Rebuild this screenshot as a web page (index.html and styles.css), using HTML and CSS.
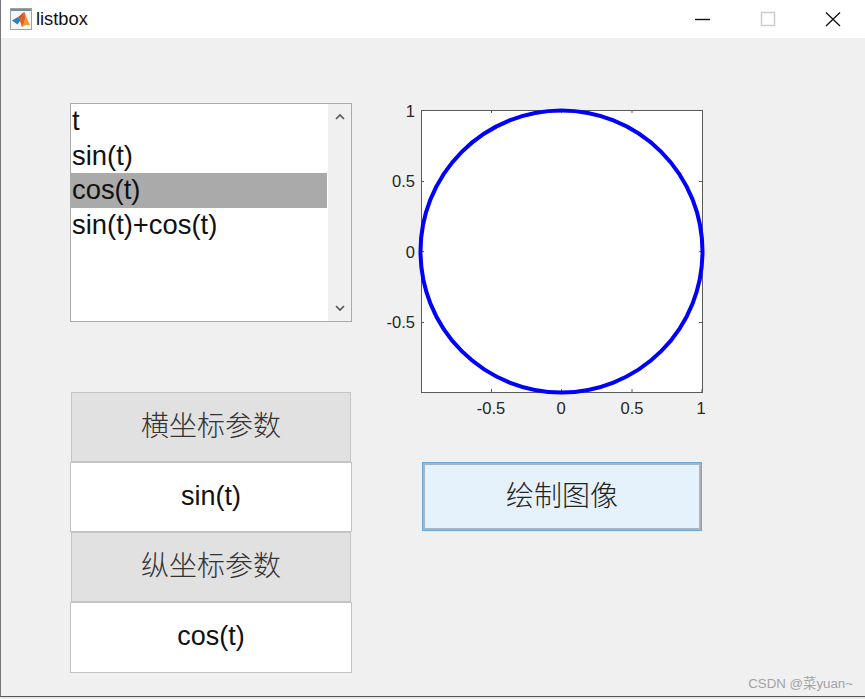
FILE: index.html
```html
<!DOCTYPE html>
<html lang="zh-CN">
<head>
  <meta charset="UTF-8">
  <title>listbox</title>
  <link rel="stylesheet" href="styles.css">
</head>
<body>

  <div class="window">
    <!-- Title bar -->
    <div class="titlebar">
      <svg class="app-icon" width="22" height="22" viewBox="0 0 22 22">
        <rect x="0.5" y="0.5" width="21" height="21" fill="#f6f6f6" stroke="#a0a0a0"/>
        <rect x="1" y="1" width="20" height="2" fill="#6a8fb3"/>
        <path d="M2 12.5 L8 9 L11 11.5 L7.5 16.5 Z" fill="#2f7fc0"/>
        <path d="M8 9 C10 8 12 5 14.5 4 L11 11.5 Z" fill="#c8501f"/>
        <path d="M14.5 4 C16 7 18 14 20.5 17.5 C18 16 16 16.5 12 19 C11.5 16 10.5 14 10 12.5 Z" fill="#ee9a2e"/>
        <path d="M14.5 4 L15 11 L12 19 L10 12.5 Z" fill="#d9622a"/>
      </svg>
      <span class="title">listbox</span>
      <div class="controls">
        <svg class="ctl-min" width="16" height="16" viewBox="0 0 16 16"><path d="M0 8.5 H15" stroke="#111" stroke-width="1.4"/></svg>
        <svg class="ctl-max" width="16" height="16" viewBox="0 0 16 16"><rect x="1.5" y="1.5" width="13" height="13" fill="none" stroke="#ccc" stroke-width="1.5"/></svg>
        <svg class="ctl-close" width="16" height="16" viewBox="0 0 16 16"><path d="M1 1.5 L15 15 M15 1.5 L1 15" stroke="#111" stroke-width="1.3"/></svg>
      </div>
    </div>

    <div class="figure">
      <div class="col-left">
        <!-- Listbox -->
        <div class="listbox">
          <ul class="items">
            <li>t</li>
            <li>sin(t)</li>
            <li class="selected">cos(t)</li>
            <li>sin(t)+cos(t)</li>
          </ul>
          <div class="scrollbar">
            <svg width="10" height="8" viewBox="0 0 10 8"><path d="M1 6 L5 2 L9 6" fill="none" stroke="#555" stroke-width="1.6"/></svg>
            <svg width="10" height="8" viewBox="0 0 10 8"><path d="M1 2 L5 6 L9 2" fill="none" stroke="#555" stroke-width="1.6"/></svg>
          </div>
        </div>

        <!-- Parameters -->
        <div class="params">
          <div class="cell label"><span>横坐标参数</span></div>
          <div class="cell value">sin(t)</div>
          <div class="cell label"><span>纵坐标参数</span></div>
          <div class="cell value">cos(t)</div>
        </div>
      </div>

      <div class="col-right">
        <!-- Axes -->
        <svg class="axes" width="330" height="317" viewBox="0 0 330 317">
          <rect x="41.5" y="7.5" width="281" height="282" fill="#fff" stroke="#5a5a5a"/>
          <path d="M111.5 7 v3 M181.5 7 v3 M252 7 v3 M111.5 289 v-3 M181.5 289 v-3 M252 289 v-3 M322 289 v-3
                   M41 78.5 h3 M41 148.5 h3 M41 219.5 h3 M322 78.5 h-3 M322 148.5 h-3 M322 219.5 h-3" stroke="#5a5a5a"/>
          <circle cx="181.5" cy="148.5" r="141" fill="none" stroke="#0000ff" stroke-width="4"/>
          <g class="tick-y">
            <text x="35" y="14">1</text>
            <text x="35" y="84">0.5</text>
            <text x="35" y="155">0</text>
            <text x="35" y="225">-0.5</text>
          </g>
          <g class="tick-x">
            <text x="111" y="311">-0.5</text>
            <text x="181" y="311">0</text>
            <text x="252" y="311">0.5</text>
            <text x="321" y="311">1</text>
          </g>
        </svg>

        <button class="plot-btn">绘制图像</button>
      </div>
    </div>

    <div class="watermark">CSDN @菜yuan~</div>
  </div>

</body>
</html>
```

FILE: styles.css
```css
html, body { margin: 0; padding: 0; }
body {
  width: 865px;
  height: 699px;
  overflow: hidden;
  background: #e8e8e8;
  font-family: "Liberation Sans", "Noto Sans CJK SC", sans-serif;
  color: #111;
}

.window {
  position: relative;
  height: 697px;
  box-sizing: border-box;
  background: #f0f0f0;
  border-left: 1px solid #777;
  border-bottom: 1px solid #555;
}

/* title bar */
.titlebar {
  display: flex;
  align-items: center;
  height: 38px;
  background: #fff;
  padding-left: 9px;
}
.app-icon { margin-right: 4px; margin-top: -1px; }
.title { font-size: 18.3px; color: #111; margin-top: -1px; }
.controls {
  display: flex;
  align-items: center;
  margin-left: auto;
  margin-right: 24px;
  gap: 49px;
  margin-top: -1px;
}

/* main area */
.figure {
  display: flex;
  gap: 28px;
  padding: 65px 0 0 69px;
}
.col-left { width: 282px; }

.listbox {
  display: flex;
  height: 219px;
  box-sizing: border-box;
  background: #fff;
  border: 1px solid #aaa;
}
.items {
  flex: 1;
  list-style: none;
  margin: 0;
  padding: 0;
  font-size: 27.4px;
  color: #111;
}
.items li {
  height: 34.5px;
  line-height: 33px;
  padding-left: 1px;
}
.items li.selected { background: #aaa; }
.scrollbar {
  display: flex;
  flex-direction: column;
  justify-content: space-between;
  align-items: center;
  width: 23px;
  margin-left: 1px;
  padding: 9px 0;
  box-sizing: border-box;
  background: #f0f0f0;
}

.params { margin-top: 70px; }
.cell {
  display: flex;
  align-items: center;
  justify-content: center;
  height: 70px;
  box-sizing: border-box;
  border: 1px solid #c4c4c4;
  font-size: 27px;
}
.label {
  margin: 0 1px;
  background: #e1e1e1;
  color: #333;
  font-size: 28px;
  font-weight: 300;
}
.label span { margin-top: -6px; }
.value {
  background: #fff;
  padding-bottom: 2px;
}
.value:last-child { height: 71px; }

/* axes */
.col-right { width: 330px; }
.axes { display: block; }
.axes text {
  font-size: 16.5px;
  fill: #262626;
}
.tick-y text { text-anchor: end; }
.tick-x text { text-anchor: middle; }

.plot-btn {
  display: block;
  width: 280px;
  height: 69px;
  margin: 42px 0 0 42px;
  padding: 0 0 6px;
  box-sizing: border-box;
  background: #e5f1fb;
  border: 3px solid #a9b4bc;
  outline: 1px solid #5fa9e6;
  outline-offset: -1px;
  font-family: inherit;
  font-size: 28px;
  font-weight: 300;
  color: #222;
}

.watermark {
  position: absolute;
  right: 12px;
  bottom: 4px;
  font-size: 13.3px;
  color: #a3a3a3;
}
```
